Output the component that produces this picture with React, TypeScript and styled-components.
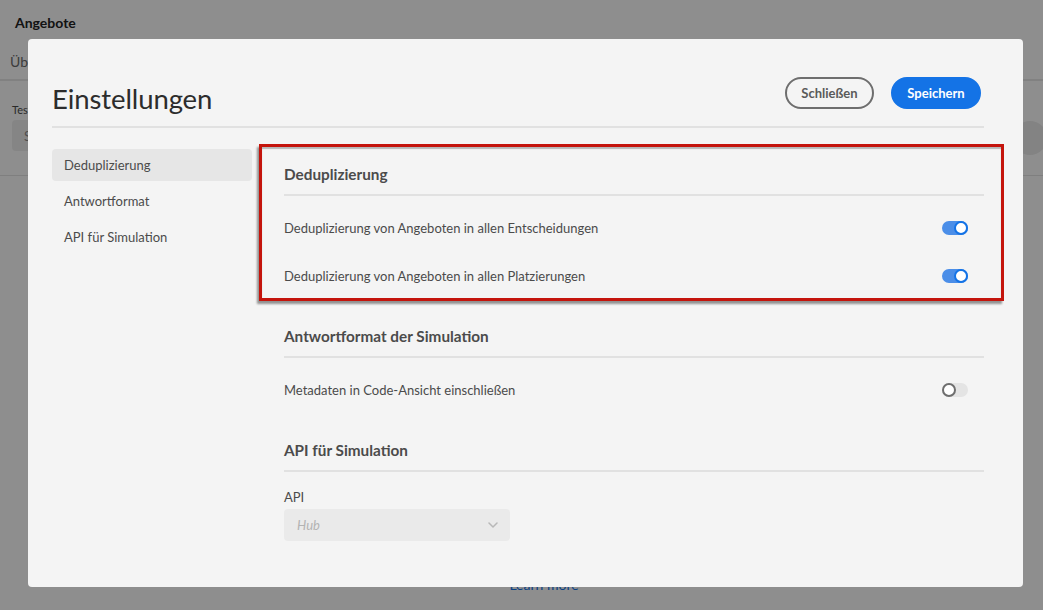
import React from "react";
import styled, { createGlobalStyle, css } from "styled-components";

const GlobalStyle = createGlobalStyle`
  html, body { margin: 0; padding: 0; }
  body { font-family: Lato, "Open Sans", sans-serif; background: #fafafa; }
  * { box-sizing: border-box; }
`;

const Page = styled.div`
  width: 1043px;
  height: 610px;
  overflow: hidden;
  background: #fafafa;
  position: relative;
`;

const TopBar = styled.div`
  height: 44px;
  display: flex;
  align-items: center;
  padding-left: 15px;
  font-weight: 700;
  font-size: 14px;
  color: #222;
`;

const Tabs = styled.div`
  height: 37px;
  display: flex;
  align-items: center;
  gap: 34px;
  padding-left: 10px;
  border-bottom: 2px solid #e3e3e3;
  font-size: 14px;
  color: #6a6a6a;
`;

const Filter = styled.div`
  height: 95px;
  padding: 22px 12px 0;
  display: flex;
  justify-content: space-between;
  border-bottom: 1px solid #e0e0e0;
`;

const FilterField = styled.div`
  display: flex;
  flex-direction: column;
  gap: 4px;
  font-size: 11px;
  color: #4b4b4b;
`;

const FilterInput = styled.div`
  width: 220px;
  height: 31px;
  border-radius: 4px;
  background: #eaeaea;
  padding-left: 12px;
  display: flex;
  align-items: center;
  font-size: 13px;
  color: #8a8a8a;
`;

const RoundBtn = styled.div`
  width: 34px;
  height: 34px;
  border-radius: 50%;
  background: #e6e6e6;
  margin-top: 18px;
  margin-right: -16px;
`;

const Empty = styled.div`
  padding-top: 400px;
  text-align: center;
  padding-left: 45px;
  font-size: 14px;
  color: #1473e6;
`;

const Backdrop = styled.div`
  position: absolute;
  inset: 0;
  background: rgba(0, 0, 0, 0.43);
`;

const Modal = styled.div`
  position: absolute;
  top: 39px;
  left: 28px;
  width: 995px;
  height: 548px;
  border-radius: 4px;
  background: #f4f4f4;
  padding: 38px 39px 0 24px;
  display: flex;
  flex-direction: column;
  color: #4b4b4b;
`;

const Header = styled.div`
  display: flex;
  align-items: center;
  justify-content: space-between;
  height: 32px;
  padding-bottom: 17px;
  box-sizing: content-box;
  border-bottom: 2px solid #e1e1e1;
`;

const Title = styled.h1`
  margin: 10px 0 0;
  font-size: 27.5px;
  font-weight: 400;
  color: #2c2c2c;
  letter-spacing: -0.1px;
`;

const Actions = styled.div`
  display: flex;
  gap: 17px;
  margin-right: 3px;
`;

const Button = styled.button<{ $primary?: boolean }>`
  height: 32px;
  border-radius: 16px;
  padding: 0 14px;
  font-family: Lato, sans-serif;
  font-weight: 700;
  font-size: 13px;
  cursor: pointer;
  ${(p) =>
    p.$primary
      ? css`
          background: #1473e6;
          border: 2px solid #1473e6;
          color: #fff;
          min-width: 90px;
        `
      : css`
          background: transparent;
          border: 2px solid #6e6e6e;
          color: #5a5a5a;
          min-width: 89px;
        `}
`;

const Body = styled.div`
  display: flex;
  gap: 32px;
  padding-top: 21px;
`;

const Nav = styled.nav`
  width: 200px;
  display: flex;
  flex-direction: column;
  gap: 4px;
`;

const NavItem = styled.div<{ $active?: boolean }>`
  height: 32px;
  display: flex;
  align-items: center;
  padding-left: 12px;
  border-radius: 4px;
  font-size: 13px;
  color: #4b4b4b;
  background: ${(p) => (p.$active ? "#e6e6e6" : "transparent")};
`;

const Content = styled.div`
  flex: 1;
  display: flex;
  flex-direction: column;
  gap: 26px;
  padding-top: 15px;
`;

const Section = styled.section<{ $highlight?: boolean }>`
  position: relative;
  ${(p) =>
    p.$highlight &&
    css`
      &::after {
        content: "";
        position: absolute;
        top: -20px;
        left: -25px;
        right: -20px;
        bottom: -1px;
        border: 3px solid #c4140c;
        box-shadow: -2px 3px 2px rgba(0, 0, 0, 0.4), inset 0 2px 1px rgba(0, 0, 0, 0.25);
        pointer-events: none;
      }
    `}
`;

const SectionTitle = styled.h2`
  margin: 0;
  height: 20px;
  line-height: 20px;
  font-size: 15.3px;
  font-weight: 700;
  color: #4b4b4b;
  padding-bottom: 10px;
  box-sizing: content-box;
  border-bottom: 2px solid #e1e1e1;
`;

const Rows = styled.div`
  padding-top: 8px;
`;

const Row = styled.div`
  height: 48px;
  display: flex;
  align-items: center;
  justify-content: space-between;
  padding-right: 16px;
  font-size: 13px;
  color: #4b4b4b;
`;

const Track = styled.span<{ $on?: boolean }>`
  position: relative;
  width: 26px;
  height: 14px;
  border-radius: 7px;
  background: ${(p) => (p.$on ? "#4b8ee8" : "#e4e4e4")};
`;

const Knob = styled.span<{ $on?: boolean }>`
  position: absolute;
  top: 0;
  ${(p) => (p.$on ? "right: 0;" : "left: 0;")}
  width: 14px;
  height: 14px;
  border-radius: 50%;
  background: #fff;
  border: 2px solid ${(p) => (p.$on ? "#1473e6" : "#6e6e6e")};
`;

const Field = styled.div`
  padding-top: 16px;
  display: flex;
  flex-direction: column;
  gap: 3px;
`;

const Label = styled.label`
  font-size: 13px;
  line-height: 18px;
  color: #4b4b4b;
`;

const Select = styled.div`
  width: 226px;
  height: 32px;
  border-radius: 4px;
  background: #eaeaea;
  padding: 0 12px 0 13px;
  display: flex;
  align-items: center;
  justify-content: space-between;
  font-size: 13px;
  font-style: italic;
  color: #b3b3b3;
`;

const Toggle = ({ on }: { on?: boolean }) => (
  <Track $on={on}>
    <Knob $on={on} />
  </Track>
);

export default function App() {
  return (
    <Page>
      <GlobalStyle />
      <TopBar>Angebote</TopBar>
      <Tabs>
        <span>Übersicht</span>
        <span>Angebote</span>
        <span>Entscheidungen</span>
        <span>Sammlungen</span>
        <span>Komponenten</span>
      </Tabs>
      <Filter>
        <FilterField>
          Testprofil
          <FilterInput>Suchen</FilterInput>
        </FilterField>
        <RoundBtn />
      </Filter>
      <Empty>Learn more</Empty>
      <Backdrop />
      <Modal>
        <Header>
          <Title>Einstellungen</Title>
          <Actions>
            <Button>Schließen</Button>
            <Button $primary>Speichern</Button>
          </Actions>
        </Header>
        <Body>
          <Nav>
            <NavItem $active>Deduplizierung</NavItem>
            <NavItem>Antwortformat</NavItem>
            <NavItem>API für Simulation</NavItem>
          </Nav>
          <Content>
            <Section $highlight>
              <SectionTitle>Deduplizierung</SectionTitle>
              <Rows>
                <Row>
                  Deduplizierung von Angeboten in allen Entscheidungen
                  <Toggle on />
                </Row>
                <Row>
                  Deduplizierung von Angeboten in allen Platzierungen
                  <Toggle on />
                </Row>
              </Rows>
            </Section>
            <Section>
              <SectionTitle>Antwortformat der Simulation</SectionTitle>
              <Rows>
                <Row>
                  Metadaten in Code-Ansicht einschließen
                  <Toggle />
                </Row>
              </Rows>
            </Section>
            <Section>
              <SectionTitle>API für Simulation</SectionTitle>
              <Field>
                <Label>API</Label>
                <Select>
                  Hub
                  <svg width="10" height="6" viewBox="0 0 10 6">
                    <path d="M1 1l4 4 4-4" fill="none" stroke="#b8b8b8" strokeWidth="1.5" strokeLinecap="round" strokeLinejoin="round" />
                  </svg>
                </Select>
              </Field>
            </Section>
          </Content>
        </Body>
      </Modal>
    </Page>
  );
}
